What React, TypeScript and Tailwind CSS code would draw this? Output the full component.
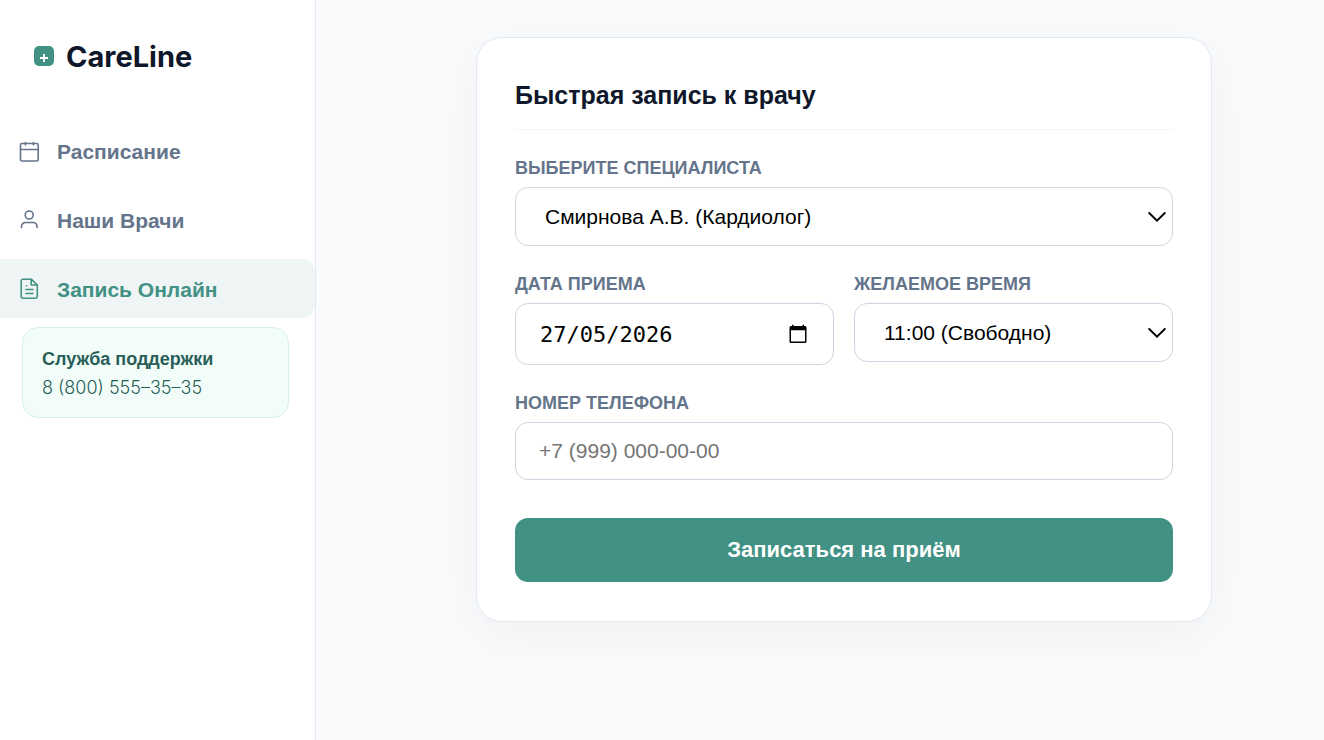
import { useState } from "react";

const navItems = [
  { id: "schedule", label: "Расписание" },
  { id: "doctors", label: "Наши Врачи" },
  { id: "booking", label: "Запись Онлайн" },
];

function NavIcon({ id }: { id: string }) {
  return (
    <svg
      viewBox="0 0 22 22"
      className="size-[22px] shrink-0"
      fill="none"
      stroke="currentColor"
      strokeWidth="1.6"
      strokeLinecap="round"
      strokeLinejoin="round"
      aria-hidden="true"
    >
      {id === "schedule" && (
        <>
          <rect x="2.500" y="3.500" width="17.700" height="17.500" rx="1.500" />
          <path d="M2.500 9.500H20.200M7.400 2.500v2.500M15.400 2.500v2.500" />
        </>
      )}
      {id === "doctors" && (
        <>
          <circle cx="11.200" cy="6" r="4" />
          <path d="M3.500 18.500v-1a4 4 0 0 1 4-4h7.500a4 4 0 0 1 4 4v1" />
        </>
      )}
      {id === "booking" && (
        <>
          <path d="M13.200 1.200H5a1.800 1.800 0 0 0-1.800 1.800v15.500A1.800 1.800 0 0 0 5 20.300h12.500a1.800 1.800 0 0 0 1.800-1.800V7z" />
          <path d="M13.200 1.200v5.800h6M8 11.500h7M8 15.500h7M8.300 7.800h.2" />
        </>
      )}
    </svg>
  );
}

function Chevron() {
  return (
    <svg
      viewBox="0 0 18 10"
      className="pointer-events-none absolute top-1/2 right-[7px] h-[10px] w-[18px] -translate-y-1/2"
      fill="none"
      stroke="black"
      strokeWidth="1.9"
      strokeLinecap="round"
      aria-hidden="true"
    >
      <path d="M1.200 1l7.800 7.600L16.800 1" />
    </svg>
  );
}

const labelClass = "text-[18px] leading-[22px] font-bold text-[#64748b] uppercase";
const controlClass = "w-full rounded-[13px] border border-[#cbd5e1] bg-white text-black";

export default function App() {
  const [date, setDate] = useState("27/05/2026");
  return (
    <div className="flex min-h-screen bg-[#f8fafc] font-['Liberation_Sans',Arial,sans-serif]">
      <aside className="w-[316px] shrink-0 border-r border-[#e2e8f0] bg-white">
        <div className="flex items-center gap-3 px-[34px] pt-9">
          <span className="flex size-5 items-center justify-center rounded-[5px] bg-[#429185]">
            <svg viewBox="0 0 20 20" className="size-5" stroke="white" strokeWidth="2" aria-hidden="true">
              <path d="M10 8v8M6 12h8" />
            </svg>
          </span>
          <span className="pt-[2px] font-['Inter','Liberation_Sans',sans-serif] text-[29px] leading-[38px] font-bold text-[#0f172a]">
            CareLine
          </span>
        </div>
        <nav className="mt-[45px] flex flex-col gap-[10px]">
          {navItems.map((item) => (
            <a
              key={item.id}
              href={"#" + item.id}
              aria-current={item.id === "booking" ? "page" : undefined}
              className={
                item.id === "booking"
                  ? "flex h-[59px] items-center gap-[17px] rounded-r-[13px] bg-[#eff5f5] px-[18px] text-[21px] font-bold text-[#429185]"
                  : "flex h-[59px] items-center gap-[17px] rounded-r-[13px] px-[18px] text-[21px] font-bold text-[#64748b]"
              }
            >
              <NavIcon id={item.id} />
              <span className="pt-[2px]">{item.label}</span>
            </a>
          ))}
        </nav>
        <div className="mt-[9px] mr-[26px] ml-[22px] rounded-2xl border border-[#d9f2e8] bg-[#f2fdfa] px-[19px] pt-[17px] pb-[15px] text-[#285e57]">
          <p className="text-[18px] leading-[29px] font-bold">Служба поддержки</p>
          <p className="font-['Inter','Liberation_Sans',sans-serif] text-[18px] leading-[28px] font-light">
            8 (800) 555–35–35
          </p>
        </div>
      </aside>
      <main className="flex flex-1 items-start justify-center py-[37px] pr-10 pl-[88px]">
        <form
          onSubmit={(e) => e.preventDefault()}
          className="w-full max-w-[736px] rounded-[26px] border border-[#e2e8f0] bg-white px-[38px] pt-[38px] pb-[39px] shadow-[0_13px_50px_rgba(0,0,0,0.04)]"
        >
          <h1 className="border-b border-[#f1f5f9] pt-[1px] pb-[16px] text-[25px] leading-9 font-bold text-[#0f172a]">
            Быстрая запись к врачу
          </h1>
          <div className="mt-[27px] flex flex-col gap-2">
            <label htmlFor="doctor" className={labelClass}>
              Выберите специалиста
            </label>
            <div className="relative">
              <select
                id="doctor"
                className={controlClass + " h-[59px] appearance-none px-[29px] text-[21px]"}
              >
                <option>Смирнова А.В. (Кардиолог)</option>
              </select>
              <Chevron />
            </div>
          </div>
          <div className="mt-[27px] grid grid-cols-2 items-start gap-5">
            <div className="flex flex-col gap-2">
              <label htmlFor="date" className={labelClass}>
                Дата приема
              </label>
              <div className={controlClass + " flex h-[62px] items-center pr-[25px] pl-6"}>
                <input
                  id="date"
                  type="text"
                  inputMode="numeric"
                  value={date}
                  onChange={(e) => setDate(e.target.value)}
                  className="min-w-0 flex-1 bg-transparent font-['DejaVu_Sans_Mono',monospace] text-[22px] outline-none"
                />
                <button type="button" aria-label="Открыть календарь" className="size-5">
                  <svg viewBox="0 0 20 20" className="size-5" aria-hidden="true">
                    <path
                      fill="black"
                      fillRule="evenodd"
                      d="M4 .8h1.500V2h9V.8H16V2h1a1.500 1.500 0 0 1 1.500 1.500v14A1.500 1.500 0 0 1 17 19H3a1.500 1.500 0 0 1-1.500-1.500v-14A1.500 1.500 0 0 1 3 2h1zM3 6.300v11.200h14V6.300z"
                    />
                  </svg>
                </button>
              </div>
            </div>
            <div className="flex flex-col gap-2">
              <label htmlFor="time" className={labelClass}>
                Желаемое время
              </label>
              <div className="relative">
                <select
                  id="time"
                  className={controlClass + " h-[59px] appearance-none px-[29px] text-[21px]"}
                >
                  <option>11:00 (Свободно)</option>
                </select>
                <Chevron />
              </div>
            </div>
          </div>
          <div className="mt-[27px] flex flex-col gap-2">
            <label htmlFor="phone" className={labelClass}>
              Номер телефона
            </label>
            <input
              id="phone"
              type="tel"
              placeholder="+7 (999) 000-00-00"
              className={controlClass + " h-[58px] px-[23px] text-[21px] placeholder:text-[#757575]"}
            />
          </div>
          <button
            type="submit"
            className="mt-[38px] h-16 w-full rounded-[13px] bg-[#429185] pb-[2px] text-[22px] font-bold text-white"
          >
            Записаться на приём
          </button>
        </form>
      </main>
    </div>
  );
}
